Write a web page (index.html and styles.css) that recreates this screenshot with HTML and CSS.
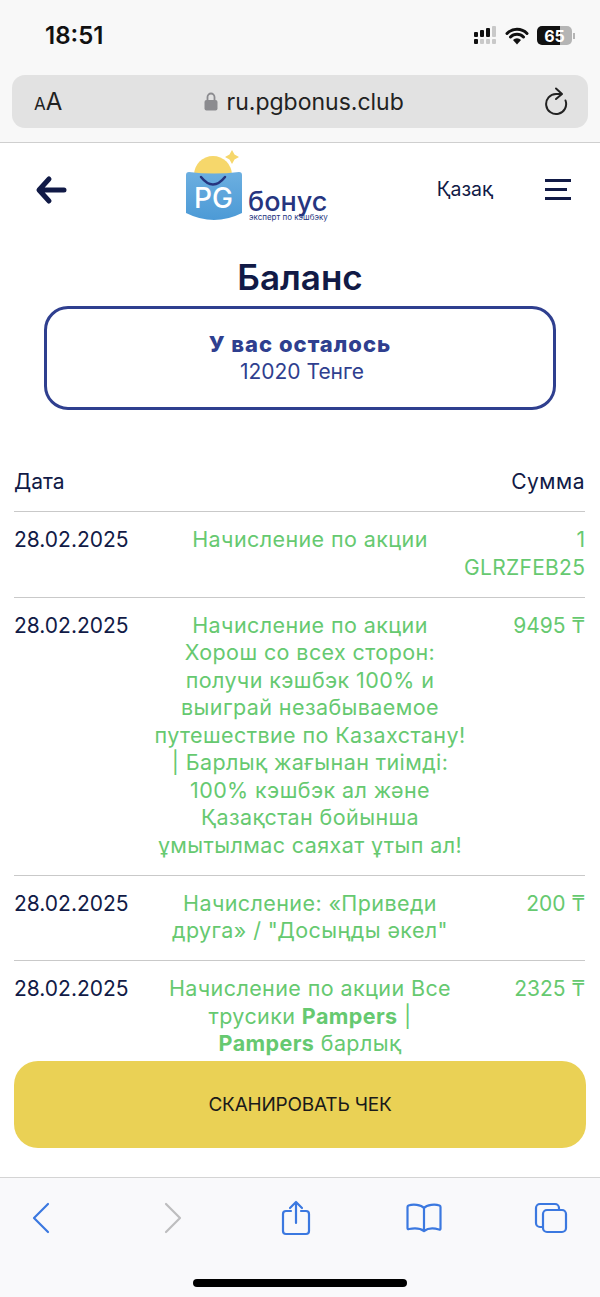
FILE: index.html
```html
<!DOCTYPE html>
<html lang="ru">

<head>
    <meta charset="UTF-8">
    <meta name="viewport" content="width=device-width, initial-scale=1.0">
    <title>Баланс</title>
    <link rel="stylesheet" href="styles.css">
</head>

<body>
    <div class="phone">
        <!-- Browser top -->
        <div class="browser-top">
            <div class="status-bar">
                <span class="time">18:51</span>
                <div class="status-icons">
                    <svg width="24" height="20" viewBox="0 0 24 20">
                        <g fill="#111">
                            <rect x="1" y="6" width="4" height="5" rx="1"/>
                            <rect x="7" y="4" width="4" height="7" rx="1"/>
                            <rect x="13" y="2" width="4" height="9" rx="1"/>
                            <rect x="1" y="13" width="4" height="5" rx="1"/>
                        </g>
                        <g fill="#c9c9c9">
                            <rect x="19" y="0" width="4" height="11" rx="1"/>
                            <rect x="7" y="13" width="4" height="5" rx="1"/>
                            <rect x="13" y="13" width="4" height="5" rx="1"/>
                            <rect x="19" y="13" width="4" height="5" rx="1"/>
                        </g>
                    </svg>
                    <svg width="24" height="18" viewBox="0 0 24 18">
                        <path d="M2 6.500a14 14 0 0 1 20 0M5.500 10a9 9 0 0 1 13 0" fill="none" stroke="#111" stroke-width="3" stroke-linecap="round"/>
                        <path d="M8 13a5.500 5.500 0 0 1 8 0l-4 4.500z" fill="#111"/>
                    </svg>
                    <div class="battery">
                        <span class="battery-num">65</span>
                    </div>
                    <span class="battery-cap"></span>
                </div>
            </div>
            <div class="address-bar">
                <span class="aa"><small>A</small>A</span>
                <span class="url">
                    <svg width="14" height="19" viewBox="0 0 14 19">
                        <path d="M3.500 8V5a3.500 3.500 0 0 1 7 0v3" fill="none" stroke="#8b8b8f" stroke-width="1.800"/>
                        <rect x="0.500" y="8" width="13" height="10.500" rx="2" fill="#8b8b8f"/>
                    </svg>
                    ru.pgbonus.club
                </span>
                <svg class="reload" width="24" height="30" viewBox="0 0 24 30">
                    <path d="M20.500 13.500A10 10 0 1 1 11 7h5" fill="none" stroke="#222" stroke-width="2" stroke-linecap="round"/>
                    <path d="M11 1.500L17 7l-6 5" fill="none" stroke="#222" stroke-width="2" stroke-linecap="round" stroke-linejoin="round"/>
                </svg>
            </div>
        </div>

        <!-- Site page -->
        <div class="page">
            <nav class="navbar">
                <svg class="back-arrow" width="32" height="32" viewBox="0 0 32 32">
                    <path d="M14 5L4 16l10 11M5 16h24" fill="none" stroke="#111a46" stroke-width="5" stroke-linecap="round" stroke-linejoin="round"/>
                </svg>
                <svg class="logo" width="146" height="76" viewBox="0 0 146 76">
                    <defs>
                        <linearGradient id="bag" x1="0" y1="0" x2="0" y2="1">
                            <stop offset="0" stop-color="#6cafe0"/>
                            <stop offset="1" stop-color="#4c9ad6"/>
                        </linearGradient>
                    </defs>
                    <circle cx="27" cy="25" r="19" fill="#f6d76b"/>
                    <path d="M46 0l2.500 4.500 4.500 2.500-4.500 2.500-2.500 4.500-2.500-4.500-4.500-2.500 4.500-2.500z" fill="#f6d76b"/>
                    <path d="M0 25q0-3 3-3q25 3 50 0q3 0 3 3v38q-28 14-56 0z" fill="url(#bag)"/>
                    <path d="M15 27q12 15 24 0" fill="none" stroke="#26357f" stroke-width="2.500" stroke-linecap="round"/>
                    <text class="logo-pg" x="8" y="58">PG</text>
                    <text class="logo-name" x="62" y="61">бонус</text>
                    <text class="logo-sub" x="63" y="70">эксперт по кэшбэку</text>
                </svg>
                <span class="lang">Қазақ</span>
                <div class="burger"><span></span><span></span><span></span></div>
            </nav>

            <h1 class="title">Баланс</h1>

            <div class="balance-box">
                <div class="balance-label">У вас осталось</div>
                <div class="balance-value">12020 Тенге</div>
            </div>

            <div class="history">
                <div class="row row-head">
                    <div>Дата</div>
                    <div></div>
                    <div class="amount">Сумма</div>
                </div>
                <div class="row">
                    <div>28.02.2025</div>
                    <div class="desc">Начисление по акции</div>
                    <div class="amount green">1 <span class="code">GLRZFEB25</span></div>
                </div>
                <div class="row">
                    <div>28.02.2025</div>
                    <div class="desc">Начисление по акции<br>Хорош со всех сторон:<br>получи кэшбэк 100% и<br>выиграй незабываемое<br>путешествие по Казахстану!<br>| Барлық жағынан тиімді:<br>100% кэшбэк ал және<br>Қазақстан бойынша<br>ұмытылмас саяхат ұтып ал!</div>
                    <div class="amount green">9495 ₸</div>
                </div>
                <div class="row">
                    <div>28.02.2025</div>
                    <div class="desc">Начисление: «Приведи<br>друга» / "Досыңды әкел"</div>
                    <div class="amount green">200 ₸</div>
                </div>
                <div class="row">
                    <div>28.02.2025</div>
                    <div class="desc">Начисление по акции Все<br>трусики <b>Pampers</b> |<br><b>Pampers</b> барлық</div>
                    <div class="amount green">2325 ₸</div>
                </div>
            </div>

            <button class="scan-btn">СКАНИРОВАТЬ ЧЕК</button>
        </div>

        <!-- Browser bottom -->
        <div class="toolbar">
            <div class="toolbar-icons">
                <svg width="36" height="36" viewBox="0 0 36 36">
                    <path d="M25 4L11 18l14 14" fill="none" stroke="#3b78e0" stroke-width="2.200" stroke-linecap="round" stroke-linejoin="round"/>
                </svg>
                <svg width="36" height="36" viewBox="0 0 36 36">
                    <path d="M15 4l14 14-14 14" fill="none" stroke="#bdbdbf" stroke-width="2.200" stroke-linecap="round" stroke-linejoin="round"/>
                </svg>
                <svg width="36" height="36" viewBox="0 0 36 36">
                    <path d="M13 11H8a3 3 0 0 0-3 3v17a3 3 0 0 0 3 3h20a3 3 0 0 0 3-3V14a3 3 0 0 0-3-3h-5M18 23V2M12 8l6-6 6 6" fill="none" stroke="#3b78e0" stroke-width="2.200" stroke-linecap="round" stroke-linejoin="round"/>
                </svg>
                <svg width="36" height="36" viewBox="0 0 36 36">
                    <path d="M18 8C15 4.500 7 4 2.500 5.500Q1.500 6 1.500 7v21q0 1.500 1.500 1C8 28 14 28 18 31c4-3 10-3 15-1.500q1.500.5 1.500-1V7q0-1-1-1.500C29 4 21 4.500 18 8zM18 8v22" fill="none" stroke="#3b78e0" stroke-width="2.200" stroke-linejoin="round"/>
                </svg>
                <svg width="36" height="36" viewBox="0 0 36 36">
                    <rect x="10" y="10" width="23" height="22" rx="4" fill="none" stroke="#3b78e0" stroke-width="2.200"/>
                    <path d="M10 27H7a4 4 0 0 1-4-4V8a4 4 0 0 1 4-4h15a4 4 0 0 1 4 4v2" fill="none" stroke="#3b78e0" stroke-width="2.200"/>
                </svg>
            </div>
            <div class="home-bar"></div>
        </div>
    </div>
</body>

</html>
```

FILE: styles.css
```css
/* styles.css */
body {
    margin: 0;
    font-family: Inter, "Noto Sans", sans-serif;
    color: #111a46;
    background-color: #fff;
}

.phone {
    width: 600px;
    height: 1297px;
    display: flex;
    flex-direction: column;
    overflow: hidden;
}

/* browser top */
.browser-top {
    height: 143px;
    flex-shrink: 0;
    box-sizing: border-box;
    padding: 0 12px;
    background-color: #f8f8f8;
    border-bottom: 1px solid #cfcfcf;
}

.status-bar {
    height: 75px;
    display: flex;
    justify-content: space-between;
    align-items: center;
    padding: 0 13px 4px 33px;
    box-sizing: border-box;
}

.time {
    font-size: 24px;
    font-weight: 600;
    color: #111;
}

.status-icons {
    display: flex;
    align-items: center;
    gap: 8px;
}

.battery {
    width: 35px;
    height: 19px;
    border-radius: 5px;
    background: linear-gradient(90deg, #111 65%, #b5b5b5 65%);
    display: flex;
    align-items: center;
    justify-content: center;
}

.battery-num {
    color: #fff;
    font-size: 16px;
    font-weight: 700;
}

.battery-cap {
    width: 2px;
    height: 6px;
    margin-left: -7px;
    background-color: #b5b5b5;
}

.address-bar {
    height: 53px;
    border-radius: 13px;
    background-color: #e2e2e2;
    display: flex;
    align-items: center;
    justify-content: space-between;
    padding: 0 19px 0 22px;
    color: #222;
}

.aa {
    font-size: 24px;
}

.aa small {
    font-size: 17px;
}

.url {
    display: flex;
    align-items: center;
    gap: 9px;
    font-size: 23px;
}

/* site page */
.page {
    position: relative;
    flex: 1;
    overflow: hidden;
    background-color: #fff;
}

.navbar {
    height: 100px;
    box-sizing: border-box;
    padding: 0 29px 0 35px;
    display: flex;
    align-items: center;
}

.back-arrow {
    margin-top: -7px;
}

.logo {
    margin: -10px 0 0 119px;
}

.logo-pg {
    font-size: 28px;
    font-weight: 500;
    fill: #fff;
}

.logo-name {
    font-size: 27px;
    font-weight: 500;
    fill: #26357f;
}

.logo-sub {
    font-size: 8px;
    fill: #26357f;
}

.lang {
    margin-left: auto;
    margin-right: 52px;
    margin-top: -8px;
    font-size: 19.500px;
}

.burger {
    display: flex;
    flex-direction: column;
    gap: 6px;
    margin-top: -8px;
}

.burger span {
    display: block;
    width: 26px;
    height: 3px;
    background-color: #111a46;
}

.burger span:nth-child(2) {
    width: 22px;
}

.title {
    margin: 12px 0 0;
    text-align: center;
    font-size: 35px;
    line-height: 44px;
    font-weight: 600;
}

.balance-box {
    margin: 7px 44px 0;
    height: 104px;
    box-sizing: border-box;
    border: 3px solid #2f3f8f;
    border-radius: 24px;
    display: flex;
    flex-direction: column;
    justify-content: center;
    align-items: center;
    color: #2f3f8f;
    font-size: 21px;
    line-height: 28px;
}

.balance-label {
    font-size: 22px;
    font-weight: 800;
    letter-spacing: 1px;
}

.balance-value {
    margin-left: 4px;
}

.history {
    margin: 44px 15px 0 14px;
    font-size: 21px;
    line-height: 27.500px;
}

.row {
    display: grid;
    grid-template-columns: 142px 308px 121px;
    padding: 14px 0 15.500px;
    border-top: 1px solid #c9c9c9;
}

.row-head {
    border-top: none;
}

.row-head .amount {
    letter-spacing: 0.500px;
}

.desc {
    font-size: 21.500px;
    letter-spacing: 0.400px;
    text-align: center;
    white-space: nowrap;
    margin: 0 -6px;
    color: #66c970;
}

.amount {
    text-align: right;
}

.green {
    color: #66c970;
}

.code {
    letter-spacing: 0.300px;
}

.scan-btn {
    position: absolute;
    left: 14px;
    right: 14px;
    bottom: 29px;
    height: 87px;
    border: none;
    border-radius: 24px;
    background-color: #ead155;
    color: #1a1a1a;
    font-family: inherit;
    font-size: 19px;
    letter-spacing: -0.200px;
}

/* browser bottom */
.toolbar {
    height: 120px;
    flex-shrink: 0;
    box-sizing: border-box;
    border-top: 1px solid #d4d4d4;
    background-color: #f9f9fb;
}

.toolbar-icons {
    height: 80px;
    display: flex;
    align-items: center;
    justify-content: space-between;
    padding: 0 31px 0 23px;
}

.home-bar {
    width: 214px;
    height: 8px;
    margin: 21px auto 0;
    border-radius: 4px;
    background-color: #000;
}
```
